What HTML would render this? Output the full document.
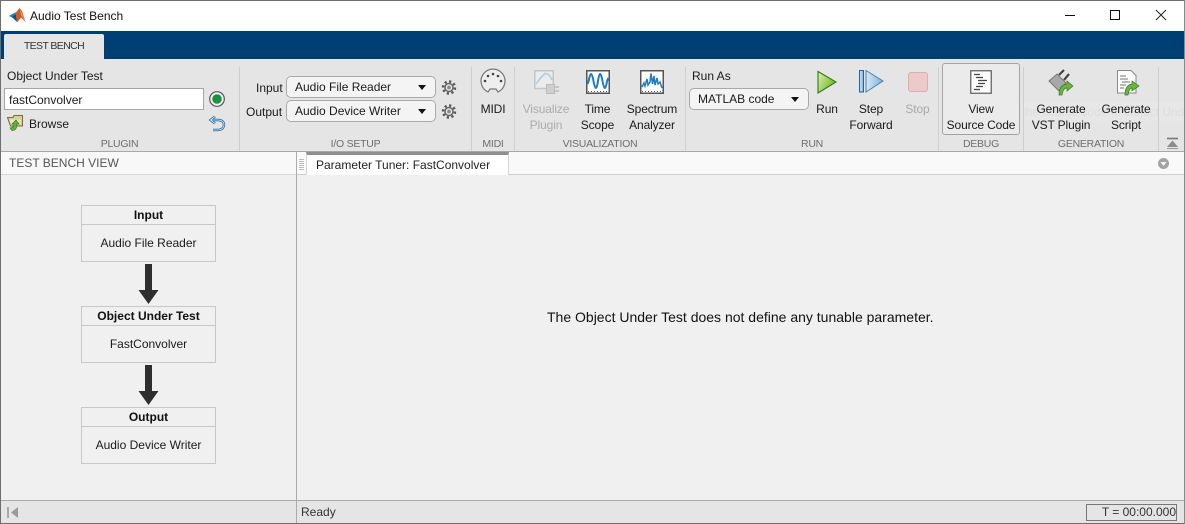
<!DOCTYPE html>
<html><head><meta charset="utf-8"><title>Audio Test Bench</title>
<style>
html,body{margin:0;padding:0;width:1185px;height:524px;overflow:hidden;background:#f0f0f0}
body{position:relative;font-family:"Liberation Sans",sans-serif;font-size:12px;color:#1a1a1a}
.a{position:absolute}
.t{position:absolute;white-space:nowrap;line-height:16px}
.c{position:absolute;white-space:nowrap;line-height:16px;text-align:center;letter-spacing:-.12px}
.sec{position:absolute;top:136px;height:16px;line-height:16px;text-align:center;color:#6e6e6e;font-size:10.5px;letter-spacing:-.25px;white-space:nowrap}
.sep{position:absolute;top:67px;height:84px;width:1px;background:#cfcfcf}
.dd{position:absolute;background:#f4f4f4;border:1px solid #a9a9a9;border-radius:5px;box-sizing:border-box;line-height:21px;padding-left:8px;white-space:nowrap}
.dd:after{content:"";position:absolute;right:9px;top:8px;border:4px solid transparent;border-top:5px solid #111;border-bottom:0}
.box{position:absolute;left:81px;width:135px;height:57px;box-sizing:border-box;border:1px solid #c8c8c8;background:#f0f0f0;text-align:center}
.box b{display:block;height:18px;line-height:18px;border-bottom:1px solid #c8c8c8;font-size:12px;color:#111}
.box span{display:block;line-height:37px;color:#1a1a1a}
svg{position:absolute;overflow:visible}
</style></head><body>
<!-- title bar -->
<div class="a" style="left:0;top:0;width:1185px;height:31px;background:#fff"></div>
<svg style="left:9px;top:8px" width="17" height="15" viewBox="0 0 17 15"><path d="M0 8 L6 4.500 L9 6.500 L5 10.500Z" fill="#2f78b5"/><path d="M3 9 L7 6 L8 14 Z" fill="#16507f"/><path d="M6.500 5 L10.500 0 L13 3 L16.500 14 L12 9.500 L8 14.500Z" fill="#d4572a"/><path d="M10.500 0 L16.500 14 L12 7Z" fill="#f0a03c"/></svg>
<div class="t" style="left:30px;top:8px;color:#111">Audio Test Bench</div>
<svg style="left:1060px;top:8px" width="120" height="16"><path d="M5 7.500H15" stroke="#111" fill="none"/><rect x="50.500" y="2.500" width="9" height="9" stroke="#111" fill="none"/><path d="M96 2L106 12M106 2L96 12" stroke="#222" fill="none"/></svg>
<!-- blue band -->
<div class="a" style="left:0;top:31px;width:1185px;height:28px;background:#003f73"></div>
<div class="a" style="left:4px;top:34px;width:100px;height:25px;background:#e6e6e6;border-radius:2px 2px 0 0"></div>
<div class="c" style="left:4px;width:100px;top:38px;font-size:10.5px;letter-spacing:-.6px;color:#333">TEST BENCH</div>
<!-- ribbon -->
<div class="a" style="left:0;top:59px;width:1185px;height:92px;background:#e5e5e5"></div>
<div class="a" style="left:0;top:151px;width:1185px;height:1px;background:#a8a8a8"></div>
<!-- tooltip ghost -->
<div class="a" style="left:984px;top:102px;width:201px;height:19px;background:#e7e7e7"></div>
<div class="t" style="left:993px;top:104px;color:#dddddd">View the source code of Object Under Test</div>
<div class="sep" style="left:239px"></div><div class="sep" style="left:471px"></div><div class="sep" style="left:514px"></div><div class="sep" style="left:685px"></div><div class="sep" style="left:938px"></div><div class="sep" style="left:1023px"></div><div class="sep" style="left:1158px"></div>
<!-- plugin -->
<div class="t" style="left:7px;top:68px">Object Under Test</div>
<div class="a" style="left:4px;top:88px;width:200px;height:22px;box-sizing:border-box;background:#fff;border:1px solid #a5a5a5;line-height:22px;padding-left:4px">fastConvolver</div>
<svg style="left:208px;top:90px" width="18" height="18"><circle cx="9" cy="9" r="7.300" fill="#f4f4f4" stroke="#555" stroke-width="1.200"/><circle cx="9" cy="9" r="4.800" fill="#17943c"/></svg>
<svg style="left:7px;top:115px" width="17" height="16"><path d="M.5 2.500H6L7 .5H15.500V11H3.500Z" fill="#d8cf9a" stroke="#7a6a3a"/><path d="M3 4.500H13.500V9.500H4Z" fill="#efe9c4"/><path d="M9 5L5 9H7C7 12 5 13 3 13L5 15.500C9 15.500 10 12 10 9H12Z" fill="#62b53a" stroke="#2f7d20" stroke-width=".7"/></svg>
<div class="t" style="left:29px;top:116px">Browse</div>
<svg style="left:208px;top:115px" width="18" height="17"><g fill="none"><path d="M7 1.500L2.500 5L7 8.500M3 5H10.500Q16 5.500 16 10Q15.500 15 9.500 15H5" stroke="#2f6ea3" stroke-width="2.400"/><path d="M7 1.500L2.500 5L7 8.500M3 5H10.500Q16 5.500 16 10Q15.500 15 9.500 15H5" stroke="#d5e6f4" stroke-width=".8"/></g></svg>
<div class="sec" style="left:0;width:239px">PLUGIN</div>
<!-- io -->
<div class="t" style="left:256px;top:80px">Input</div>
<div class="t" style="left:246px;top:104px">Output</div>
<div class="dd" style="left:286px;top:76px;width:150px;height:22px">Audio File Reader</div>
<div class="dd" style="left:286px;top:100px;width:150px;height:22px">Audio Device Writer</div>
<svg style="left:441px;top:80px" width="16" height="16"><circle cx="8" cy="7.500" r="6" fill="none" stroke="#555" stroke-width="2.400" stroke-dasharray="2.200 2.500"/><circle cx="8" cy="7.500" r="4.800" fill="#666"/><circle cx="8" cy="7.500" r="3.300" fill="#e2e2e2"/><circle cx="8" cy="7.500" r="1.800" fill="#888"/></svg>
<svg style="left:441px;top:104px" width="16" height="16"><circle cx="8" cy="7.500" r="6" fill="none" stroke="#555" stroke-width="2.400" stroke-dasharray="2.200 2.500"/><circle cx="8" cy="7.500" r="4.800" fill="#666"/><circle cx="8" cy="7.500" r="3.300" fill="#e2e2e2"/><circle cx="8" cy="7.500" r="1.800" fill="#888"/></svg>
<div class="sec" style="left:240px;width:231px">I/O SETUP</div>
<!-- midi -->
<svg style="left:480px;top:69px" width="26" height="26"><path d="M8 23 A12 12 0 1 1 18 23 L16 20 H10Z" fill="#eeeeee" stroke="#777" stroke-width="1.200"/><g fill="#444"><circle cx="13" cy="5" r="1.300"/><circle cx="8" cy="7" r="1.300"/><circle cx="18" cy="7" r="1.300"/><circle cx="5" cy="12" r="1.300"/><circle cx="21" cy="12" r="1.300"/></g></svg>
<div class="c" style="left:472px;width:42px;top:101px">MIDI</div>
<div class="sec" style="left:472px;width:42px">MIDI</div>
<!-- visualization -->
<svg style="left:534px;top:70px" width="26" height="26"><path d="M.75 .75H19.250V18.500H.75Z" fill="#ececec" stroke="#c4c4c4" stroke-width="1.500"/><path d="M2 14Q7 7 11 3.500Q15 3 18 10" fill="none" stroke="#a9cce3" stroke-width="1.500"/><rect x="12.500" y="14.500" width="8" height="9" fill="#cfcfcf" stroke="#bbb"/><path d="M21 17H25M21 21H25" stroke="#bbb" stroke-width="1.500"/></svg>
<div class="c" style="left:516px;width:60px;top:101px;color:#acacac">Visualize</div>
<div class="c" style="left:516px;width:60px;top:117px;color:#acacac">Plugin</div>
<svg style="left:586px;top:70px" width="24" height="25"><rect x=".75" y=".75" width="22.500" height="22.500" fill="#fff" stroke="#555" stroke-width="1.500"/><path d="M1.500 14L2.700 11Q5 -3 7.500 11T12 11T16.500 11T21 11L22.500 8" fill="none" stroke="#1f7cc4" stroke-width="2"/><path d="M2 21.500H22" stroke="#555" stroke-dasharray="1 2"/></svg>
<div class="c" style="left:576px;width:43px;top:101px">Time</div>
<div class="c" style="left:576px;width:43px;top:117px">Scope</div>
<svg style="left:640px;top:70px" width="24" height="25"><rect x=".75" y=".75" width="22.500" height="22.500" fill="#fff" stroke="#555" stroke-width="1.500"/><path d="M2 17L4 13L5 16L7 9L8 15L10 12L11 3.500L12.500 14L14 6L15 15L17 8L18 14L20 12L22 18" fill="none" stroke="#1f7cc4" stroke-width="1.500"/><path d="M2 21.500H22" stroke="#555" stroke-dasharray="1 2"/></svg>
<div class="c" style="left:622px;width:60px;top:101px">Spectrum</div>
<div class="c" style="left:622px;width:60px;top:117px">Analyzer</div>
<div class="sec" style="left:515px;width:170px">VISUALIZATION</div>
<!-- run -->
<div class="t" style="left:692px;top:68px">Run As</div>
<div class="dd" style="left:689px;top:88px;width:120px;height:22px">MATLAB code</div>
<svg style="left:816px;top:70px" width="22" height="25"><defs><linearGradient id="g" x1="0" x2="1" y1="0" y2=".6"><stop offset="0" stop-color="#e2f0b0"/><stop offset="1" stop-color="#6cb81c"/></linearGradient></defs><path d="M2 1.500L20 12L2 23Z" fill="url(#g)" stroke="#2c7a22" stroke-width="1.100"/></svg>
<div class="c" style="left:812px;width:30px;top:101px">Run</div>
<svg style="left:858px;top:69px" width="26" height="25"><defs><linearGradient id="b" x1="0" x2="1"><stop offset="0" stop-color="#d8e9f7"/><stop offset="1" stop-color="#7ab0de"/></linearGradient></defs><rect x="1.500" y="1.500" width="4" height="21.500" fill="url(#b)" stroke="#2d5f8c"/><path d="M8 1.500L25 12L8 23Z" fill="url(#b)" stroke="#4a7ea8"/></svg>
<div class="c" style="left:845px;width:52px;top:101px">Step</div>
<div class="c" style="left:845px;width:52px;top:117px">Forward</div>
<div class="a" style="left:908px;top:72px;width:20px;height:20px;box-sizing:border-box;background:#eccaca;border:1px solid #d8b0b0;border-radius:3px"></div>
<div class="c" style="left:900px;width:35px;top:101px;color:#a9a9a9">Stop</div>
<div class="sec" style="left:686px;width:252px">RUN</div>
<!-- debug -->
<div class="a" style="left:942px;top:63px;width:78px;height:72px;box-sizing:border-box;border:1px solid #a3a3a3;border-radius:3px;background:#ebebeb"></div>
<svg style="left:970px;top:70px" width="22" height="25"><rect x=".75" y=".75" width="20.500" height="22.500" fill="#fbfbfb" stroke="#666" stroke-width="1.300"/><path d="M4 4.500H10M6 7.500H13M8 10.500H17M8 13.500H15M6 16.500H13M4 19.500H10" stroke="#444" stroke-width="1.200" fill="none"/></svg>
<div class="c" style="left:943px;width:76px;top:101px">View</div>
<div class="c" style="left:943px;width:76px;top:117px">Source Code</div>
<div class="sec" style="left:939px;width:84px">DEBUG</div>
<!-- generation -->
<svg style="left:1048px;top:70px" width="26" height="26"><path d="M1 11L9 4L18 13L11 21Z" fill="#a8a8a8" stroke="#777"/><path d="M11 5L16 0M16 10L21 4" stroke="#444" stroke-width="2.200"/><path d="M11 25Q11 15 19 14V11L25 16L19 21V18Q15 18 14 25Z" fill="#6cb33f" stroke="#2f7d20" stroke-width=".7"/></svg>
<div class="c" style="left:1028px;width:66px;top:101px">Generate</div>
<div class="c" style="left:1028px;width:66px;top:117px">VST Plugin</div>
<svg style="left:1116px;top:70px" width="24" height="26"><path d="M1.500 .5H15L20 5.500V23H1.500Z" fill="#fbfbfb" stroke="#888"/><path d="M4 6H10M4 9H12M6 12H14M4 15H10M4 18H8" stroke="#777"/><path d="M9 25Q9 15 16 14V11L23 16L16 21V18Q13 18 12 25Z" fill="#6cb33f" stroke="#2f7d20" stroke-width=".7"/></svg>
<div class="c" style="left:1096px;width:60px;top:101px">Generate</div>
<div class="c" style="left:1096px;width:60px;top:117px">Script</div>
<div class="sec" style="left:1024px;width:134px">GENERATION</div>
<svg style="left:1166px;top:138px" width="13" height="12"><path d="M1 .5H12" stroke="#777" stroke-width="1.600"/><path d="M6.500 2.500L12 9H1Z" fill="#8c8c8c"/><path d="M1 10.500H12" stroke="#999"/></svg>
<!-- left panel -->
<div class="a" style="left:0;top:152px;width:296px;height:22px;background:#f8f8f8"></div>
<div class="a" style="left:0;top:174px;width:296px;height:1px;background:#d9d9d9"></div>
<div class="t" style="left:9px;top:155px;color:#555">TEST BENCH VIEW</div>
<div class="a" style="left:296px;top:152px;width:1px;height:372px;background:#ababab"></div>
<div class="box" style="top:205px"><b>Input</b><span>Audio File Reader</span></div>
<div class="box" style="top:306px"><b>Object Under Test</b><span>FastConvolver</span></div>
<div class="box" style="top:407px"><b>Output</b><span>Audio Device Writer</span></div>
<svg style="left:139px;top:264px" width="20" height="40"><path d="M6 0H13V26H19.500L9.500 40L-.5 26H6Z" fill="#2e2e2e"/></svg>
<svg style="left:139px;top:365px" width="20" height="40"><path d="M6 0H13V26H19.500L9.500 40L-.5 26H6Z" fill="#2e2e2e"/></svg>
<!-- right tab strip -->
<div class="a" style="left:297px;top:152px;width:888px;height:23px;background:#f9f9f9;border-bottom:1px solid #cfcfcf;box-sizing:border-box"></div>
<div class="a" style="left:306px;top:152px;width:203px;height:23px;box-sizing:border-box;background:#fff;border:1px solid #d6d6d6;border-top:3px solid #8f8f8f;border-bottom:0"></div>
<div class="t" style="left:316px;top:157px;color:#222">Parameter Tuner: FastConvolver</div>
<svg style="left:299px;top:158px" width="6" height="13"><path d="M0 1.500H5M0 3.500H5M0 5.500H5M0 7.500H5M0 9.500H5M0 11.500H5" stroke="#bbb"/></svg>
<svg style="left:1158px;top:158px" width="11" height="11"><circle cx="5.500" cy="5.500" r="5.500" fill="#a3a3a3"/><path d="M2.500 4H8.500L5.500 8Z" fill="#f4f4f4"/></svg>
<div class="t" style="left:547px;top:309px;font-size:14px;color:#111">The Object Under Test does not define any tunable parameter.</div>
<!-- status -->
<div class="a" style="left:0;top:500px;width:1185px;height:24px;background:#e5e5e5;border-top:1px solid #ababab;box-sizing:border-box"></div>
<div class="a" style="left:296px;top:500px;width:1px;height:24px;background:#ababab"></div>
<svg style="left:7px;top:507px" width="12" height="11"><path d="M1 0V11" stroke="#9a9a9a" stroke-width="1.600"/><path d="M11 0V11L4 5.500Z" fill="#9a9a9a"/></svg>
<div class="t" style="left:301px;top:504px;color:#333">Ready</div>
<div class="a" style="left:1086px;top:504px;width:91px;height:17px;box-sizing:border-box;border:1px solid #777;line-height:15px;text-align:right;padding-right:0;color:#333">T = 00:00.000</div>
<!-- window border -->
<div class="a" style="left:0;top:0;width:1185px;height:524px;box-sizing:border-box;border:1px solid #6e6e6e;border-right-color:#8a8a8a"></div>
</body></html>
